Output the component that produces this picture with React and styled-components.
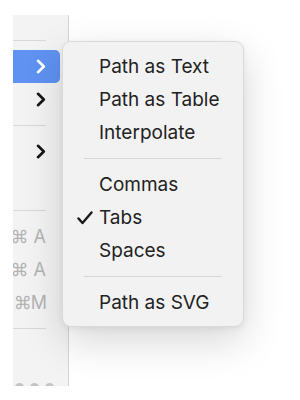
import React from "react";
import styled, { createGlobalStyle } from "styled-components";

const GlobalStyle = createGlobalStyle`
  html, body {
    margin: 0;
    padding: 0;
    background: #ffffff;
  }
  body {
    font-family: Inter, "Liberation Sans", sans-serif;
    -webkit-font-smoothing: antialiased;
  }
`;

const Stage = styled.div`
  position: relative;
  width: 300px;
  height: 400px;
  overflow: hidden;
`;

const ParentMenu = styled.div`
  margin: 15px 0 0 13px;
  width: 56px;
  height: 371px;
  padding-top: 16px;
  box-sizing: border-box;
  background: #f3f3f3;
  border-right: 1px solid #d4d4d4;
  overflow: hidden;
  display: flex;
  flex-direction: column;
`;

const ParentRow = styled.div`
  height: 33px;
  flex: none;
  margin-right: 8px;
  padding-right: 14px;
  display: flex;
  align-items: center;
  justify-content: flex-end;
  border-radius: 0 5px 5px 0;
  background: ${(p) => (p.active ? "#5f92f1" : "transparent")};
`;

const ParentSep = styled.div`
  height: 19px;
  flex: none;
  display: flex;
  align-items: center;
  margin-right: 22px;

  &::after {
    content: "";
    display: block;
    width: 100%;
    height: 1px;
    background: #d8d8d8;
  }
`;

const Shortcut = styled.span`
  font-size: 18px;
  color: #b3b3b3;
  white-space: nowrap;
  letter-spacing: ${(p) => (p.tight ? "-1px" : "0")};
`;

const Dots = styled.div`
  display: flex;
  flex: none;
  gap: 6px;
  padding-top: 12px;
  margin-left: 2px;

  span {
    width: 9px;
    height: 9px;
    border-radius: 50%;
    background: #c4c4c4;
  }
`;

const SubMenu = styled.div`
  position: absolute;
  left: 62px;
  top: 41px;
  width: 182px;
  box-sizing: border-box;
  padding: 8px 0 7px;
  background: #f2f2f2;
  border: 1px solid rgba(0, 0, 0, 0.1);
  border-radius: 9px;
  box-shadow: 0 14px 40px rgba(0, 0, 0, 0.16), 0 2px 6px rgba(0, 0, 0, 0.06);
  display: flex;
  flex-direction: column;
`;

const Item = styled.div`
  height: 33px;
  display: flex;
  align-items: center;
  position: relative;
  padding-left: 36px;
  font-size: 19px;
  color: #222222;
  white-space: nowrap;
`;

const Check = styled.svg`
  position: absolute;
  left: 14px;
  top: 10px;
`;

const SubSep = styled.div`
  height: 19px;
  display: flex;
  align-items: center;
  margin: 0 21px;

  &::after {
    content: "";
    display: block;
    width: 100%;
    height: 1px;
    background: #d6d6d6;
  }
`;

const Chevron = ({ color }) => (
  <svg width="10" height="15" viewBox="0 0 10 15">
    <path
      d="M2 1.8 L7.8 7.5 L2 13.2"
      fill="none"
      stroke={color}
      strokeWidth="2.6"
      strokeLinecap="round"
      strokeLinejoin="round"
    />
  </svg>
);

const CheckMark = () => (
  <Check width="16" height="14" viewBox="0 0 16 14">
    <path
      d="M1.5 7.5 L5.5 12 L14.5 1.5"
      fill="none"
      stroke="#1a1a1a"
      strokeWidth="2.4"
      strokeLinecap="round"
      strokeLinejoin="round"
    />
  </Check>
);

export default function App() {
  return (
    <Stage>
      <GlobalStyle />
      <ParentMenu>
        <ParentSep />
        <ParentRow active>
          <Chevron color="#ffffff" />
        </ParentRow>
        <ParentRow>
          <Chevron color="#151515" />
        </ParentRow>
        <ParentSep />
        <ParentRow>
          <Chevron color="#151515" />
        </ParentRow>
        <ParentRow />
        <ParentSep />
        <ParentRow>
          <Shortcut>⌘ A</Shortcut>
        </ParentRow>
        <ParentRow>
          <Shortcut>⌘ A</Shortcut>
        </ParentRow>
        <ParentRow>
          <Shortcut tight>⌘M</Shortcut>
        </ParentRow>
        <ParentSep />
        <ParentRow />
        <Dots>
          <span />
          <span />
          <span />
        </Dots>
      </ParentMenu>

      <SubMenu>
        <Item>Path as Text</Item>
        <Item>Path as Table</Item>
        <Item>Interpolate</Item>
        <SubSep />
        <Item>Commas</Item>
        <Item>
          <CheckMark />
          Tabs
        </Item>
        <Item>Spaces</Item>
        <SubSep />
        <Item>Path as SVG</Item>
      </SubMenu>
    </Stage>
  );
}
